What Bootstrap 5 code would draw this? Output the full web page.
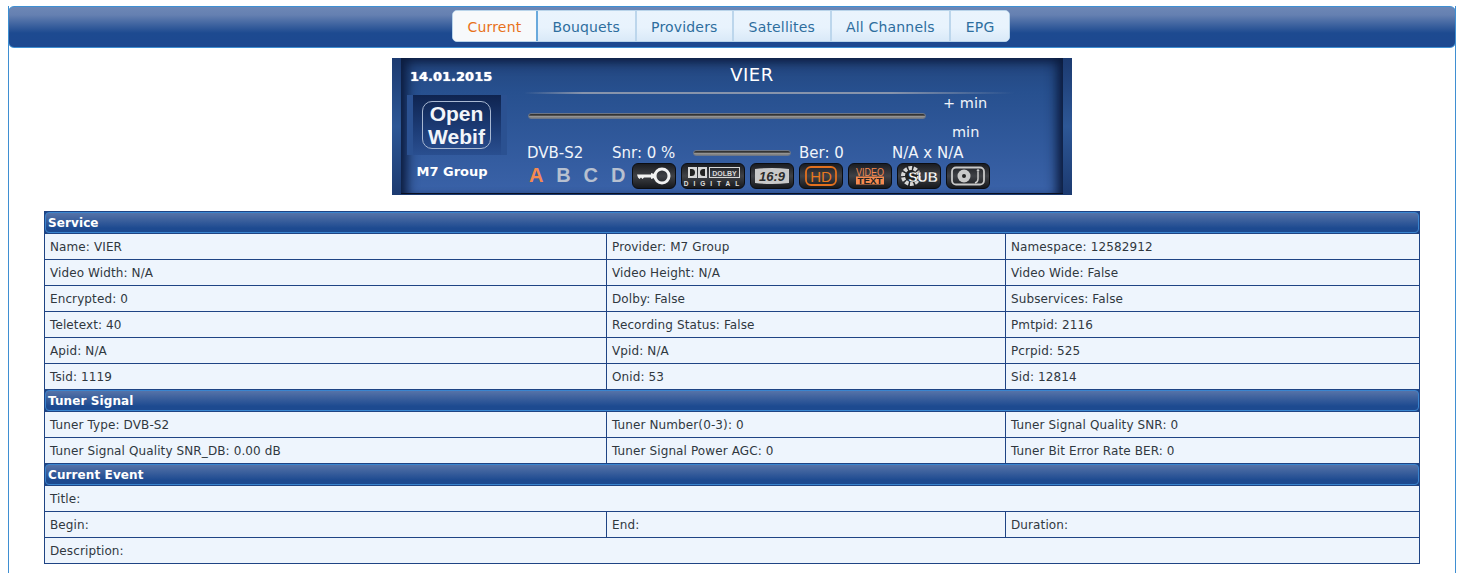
<!DOCTYPE html>
<html lang="en">
<head>
<meta charset="utf-8">
<title>OpenWebif</title>
<link href="https://cdn.jsdelivr.net/npm/bootstrap@5.3.0/dist/css/bootstrap.min.css" rel="stylesheet">
<style>
html,body{height:100%;overflow:hidden;background:#fff}
body{font-family:"DejaVu Sans",Verdana,sans-serif;font-size:12px;color:#30383f}
.shell{margin:6px 4px 0 8px;height:calc(100vh - 6px);border-left:1px solid #3f8fd2;border-right:1px solid #3f8fd2}
.topbar{margin:0 -1px;height:42px;border:1px solid #3f8fd2;border-radius:6px;background:linear-gradient(#6d87b6 0,#6580b1 20%,#1d4a90 65%,#1d4890 100%);padding:3px 2px 0 0}
.tabstrip{border:1px solid #b9d4ea;border-radius:5px;height:32px;background:#e6f2fc;overflow:hidden}
.tabstrip .nav-link{font-size:14px;line-height:16px;letter-spacing:.18px;padding:8px 14.5px 6px;height:30px;color:#2e6e9e;border-right:2px solid #bcd6ec;background:linear-gradient(#eaf4fd 0,#e8f3fd 55%,#d9e9f8 100%)}
.tabstrip .nav-item:last-child .nav-link{border-right:0}
.tabstrip .nav-link.active-tab{color:#e8711a;background:#f7f9fb;border-right:2px solid #69a9dc}
.panel-wrap{padding-top:10px}
.statuspanel{width:680px;height:137px;background:linear-gradient(#1c3a70,#2d5796 50%,#1c3a70);padding:0 9px;color:#fff}
.panel-inner{height:136px;border-bottom:1px solid #0a1020;background:linear-gradient(#23467f,#27508f 25%,#3a62a8 100%);box-shadow:inset 0 8px 12px -4px #0c1c3e,inset 14px 0 12px -8px #0c1c3e,inset -14px 0 12px -8px #0c1c3e}
.panel-left{width:123px;padding:11px 0 0 6px}
.date-txt{font-size:13px;line-height:15px;font-weight:700;padding-left:3px;text-shadow:0 0 1px #fff}
.logo-box{width:100px;height:60px;margin-top:11px;background:linear-gradient(#0f2450,#1d3d78 60%,#2a4f90);box-shadow:inset 6px 0 0 #2b5191,inset -6px 0 0 #2b5191;padding:6px 16px 0 15px}
.logo-in{width:69px;height:48px;border:1px solid #a8b8d2;border-radius:10px;font-family:"Liberation Sans",Arial,sans-serif;font-weight:700;font-size:21px;line-height:23px;text-align:center;color:#f2f5fa}
.prov-txt{font-size:13px;line-height:15px;font-weight:700;text-align:center;margin-top:9px;padding-right:10px;width:100px}
.panel-right{width:539px}
.title-txt{font-size:18px;line-height:20px;letter-spacing:.5px;text-align:center;padding-top:7px;width:456px;height:26px}
.rule-line{height:2px;margin-top:8px;width:490px;background:linear-gradient(90deg,transparent 0,#8794ac 12%,#8794ac 75%,transparent 100%)}
.pbar{background:linear-gradient(#2f2f2f,#3a3a3a 30%,#9a9a9a 65%,#777);border:1px solid #6d7686;border-radius:3px}
.pbar-long{width:398px;height:6px}
.pbar-short{width:98px;height:6px}
.min-row{height:18px;font-size:14.500px;line-height:18px;color:#f0f4fa}
.min-plus{padding-left:419px}
.min-end{margin-top:4px;padding-left:428px}
.bar-row{padding-left:4px;margin-top:1px}
.meta-row{font-size:15px;line-height:18px;color:#f0f4fa;height:18px;margin-top:2px;padding-top:1px}
.meta-a{width:88px;padding-left:3px}.meta-b{width:81px}.meta-c{width:106px}.meta-d{width:93px}
.icon-row{margin-top:2px;height:26px;padding-left:5px}
.abcd{font-family:"Liberation Sans",Arial,sans-serif;font-weight:700;font-size:20px;line-height:24px;width:27.300px;color:#b7c0d0}
.abcd.on{color:#f58a50}
.abcd.tail{width:21px}
.chips{gap:5px}
.chip{height:26px;width:44px;border:1px solid #0b0d12;border-radius:6px;background:linear-gradient(#1b1d22,#3f4146 50%,#17191d);display:block}
.chip.wide{width:64px}
.chip svg{display:block;width:100%;height:100%}
.chip text{font-family:"Liberation Sans",Arial,sans-serif}
.table-wrap{padding:16px 35px 0}
table.infotable{width:1375px;margin:0;table-layout:fixed;border-collapse:collapse;background:#eef5fd;--bs-table-bg:#eef5fd;--bs-table-color:#30383f}
table.infotable td,table.infotable th{border:1px solid #1f4484}
table.infotable td{height:26px;padding:0 5px;font-size:12px;line-height:16px;letter-spacing:.11px;color:#30383f;background:#eef5fd;vertical-align:middle}
table.infotable th{height:22px;padding:0;background:#1f4484}
.head-cell{height:21px;border:1px solid #3a85cf;border-radius:4px;background:linear-gradient(#5673a8,#1d4a90 80%);color:#fff;font-size:12px;line-height:20px;letter-spacing:.1px;font-weight:700;padding-left:2px}
.col-one{width:562px}.col-two{width:399px}.col-three{width:414px}
</style>
</head>
<body>
<div class="shell">
  <div class="topbar d-flex justify-content-center">
    <ul class="nav tabstrip flex-nowrap">
      <li class="nav-item"><a class="nav-link active-tab" href="#">Current</a></li>
      <li class="nav-item"><a class="nav-link" href="#">Bouquets</a></li>
      <li class="nav-item"><a class="nav-link" href="#">Providers</a></li>
      <li class="nav-item"><a class="nav-link" href="#">Satellites</a></li>
      <li class="nav-item"><a class="nav-link" href="#">All Channels</a></li>
      <li class="nav-item"><a class="nav-link" href="#">EPG</a></li>
    </ul>
  </div>
  <div class="panel-wrap d-flex justify-content-center">
    <div class="statuspanel">
      <div class="panel-inner d-flex">
        <div class="panel-left">
          <div class="date-txt">14.01.2015</div>
          <div class="logo-box"><div class="logo-in">Open<br>Webif</div></div>
          <div class="prov-txt">M7 Group</div>
        </div>
        <div class="panel-right">
          <div class="title-txt">VIER</div>
          <div class="rule-line"></div>
          <div class="min-row min-plus">+ min</div>
          <div class="bar-row"><div class="pbar pbar-long"></div></div>
          <div class="min-row min-end">min</div>
          <div class="meta-row d-flex align-items-center">
            <span class="meta-a">DVB-S2</span>
            <span class="meta-b">Snr: 0 %</span>
            <span class="meta-c"><span class="pbar pbar-short d-block"></span></span>
            <span class="meta-d">Ber: 0</span>
            <span>N/A x N/A</span>
          </div>
          <div class="icon-row d-flex">
            <span class="abcd on">A</span><span class="abcd">B</span><span class="abcd">C</span><span class="abcd tail">D</span>
            <div class="d-flex chips">
              <span class="chip"><svg viewBox="0 0 42 24"><path d="M4 10.500h16v3H11l-1.500 1.500-1.500-1.500-1.500 1.500-1.500-1.500z" fill="#f2f2f2"/><circle cx="29" cy="12" r="7" fill="none" stroke="#f2f2f2" stroke-width="3"/><path d="M18 9l5 1.500v3L18 15z" fill="#f2f2f2"/></svg></span>
              <span class="chip wide"><svg viewBox="0 0 62 24"><rect x="6" y="3" width="9" height="11" fill="#d8d8d8"/><rect x="16" y="3" width="9" height="11" fill="#d8d8d8"/><path d="M8 5h1.500a3.500 3.500 0 0 1 0 7H8z" fill="#222"/><path d="M23 5h-1.500a3.500 3.500 0 0 0 0 7H23z" fill="#222"/><rect x="27.500" y="3.500" width="30" height="10" fill="none" stroke="#d8d8d8"/><text x="42.500" y="11.500" text-anchor="middle" font-size="7" font-weight="700" fill="#d8d8d8">DOLBY</text><text x="32" y="21.500" text-anchor="middle" font-size="6.500" font-weight="700" letter-spacing="5" fill="#e0e0e0">DIGITAL</text></svg></span>
              <span class="chip"><svg viewBox="0 0 42 24"><path d="M4 5q17-2 34 0v14q-17 2-34 0z" fill="#c9c9c9"/><text x="21" y="16.500" text-anchor="middle" font-size="13" font-weight="700" font-style="italic" fill="#2c2c2c">16:9</text></svg></span>
              <span class="chip"><svg viewBox="0 0 42 24"><rect x="6" y="3" width="30" height="18" rx="5" fill="none" stroke="#e3701e" stroke-width="1.800"/><text x="21" y="17.500" text-anchor="middle" font-size="15" fill="#e8781f">HD</text></svg></span>
              <span class="chip"><svg viewBox="0 0 42 24"><text x="21" y="12" text-anchor="middle" font-size="10" fill="#f58a50" textLength="28" lengthAdjust="spacingAndGlyphs">VIDEO</text><rect x="7" y="12.500" width="28" height="8" fill="#f58a50"/><text x="21" y="20" text-anchor="middle" font-size="9" font-weight="700" fill="#222" textLength="25" lengthAdjust="spacingAndGlyphs">TEXT</text></svg></span>
              <span class="chip"><svg viewBox="0 0 42 24"><circle cx="13" cy="12" r="8" fill="#222" stroke="#d8d8d8" stroke-width="4" stroke-dasharray="3.500 1.500"/><text x="25" y="17.500" text-anchor="middle" font-size="14" font-weight="700" fill="#fff" stroke="#111" stroke-width=".3">SUB</text></svg></span>
              <span class="chip"><svg viewBox="0 0 42 24"><rect x="5" y="3.500" width="32" height="17" rx="4" fill="none" stroke="#c9c9c9" stroke-width="1.800"/><circle cx="17" cy="12" r="6.500" fill="#c9c9c9"/><circle cx="17" cy="12" r="2" fill="#222"/><path d="M31 8v7q0 3-3 4" fill="none" stroke="#c9c9c9" stroke-width="1.500"/><circle cx="31" cy="6.500" r="1.300" fill="#c9c9c9"/></svg></span>
            </div>
          </div>
        </div>
      </div>
    </div>
  </div>
  <div class="table-wrap">
    <table class="table infotable">
      <colgroup><col class="col-one"><col class="col-two"><col class="col-three"></colgroup>
      <tbody>
        <tr><th colspan="3"><div class="head-cell">Service</div></th></tr>
        <tr><td>Name: VIER</td><td>Provider: M7 Group</td><td>Namespace: 12582912</td></tr>
        <tr><td>Video Width: N/A</td><td>Video Height: N/A</td><td>Video Wide: False</td></tr>
        <tr><td>Encrypted: 0</td><td>Dolby: False</td><td>Subservices: False</td></tr>
        <tr><td>Teletext: 40</td><td>Recording Status: False</td><td>Pmtpid: 2116</td></tr>
        <tr><td>Apid: N/A</td><td>Vpid: N/A</td><td>Pcrpid: 525</td></tr>
        <tr><td>Tsid: 1119</td><td>Onid: 53</td><td>Sid: 12814</td></tr>
        <tr><th colspan="3"><div class="head-cell">Tuner Signal</div></th></tr>
        <tr><td>Tuner Type: DVB-S2</td><td>Tuner Number(0-3): 0</td><td>Tuner Signal Quality SNR: 0</td></tr>
        <tr><td>Tuner Signal Quality SNR_DB: 0.00 dB</td><td>Tuner Signal Power AGC: 0</td><td>Tuner Bit Error Rate BER: 0</td></tr>
        <tr><th colspan="3"><div class="head-cell">Current Event</div></th></tr>
        <tr><td colspan="3">Title:</td></tr>
        <tr><td>Begin:</td><td>End:</td><td>Duration:</td></tr>
        <tr><td colspan="3">Description:</td></tr>
      </tbody>
    </table>
  </div>
</div>
<script src="https://cdn.jsdelivr.net/npm/bootstrap@5.3.0/dist/js/bootstrap.bundle.min.js"></script>
</body>
</html>
